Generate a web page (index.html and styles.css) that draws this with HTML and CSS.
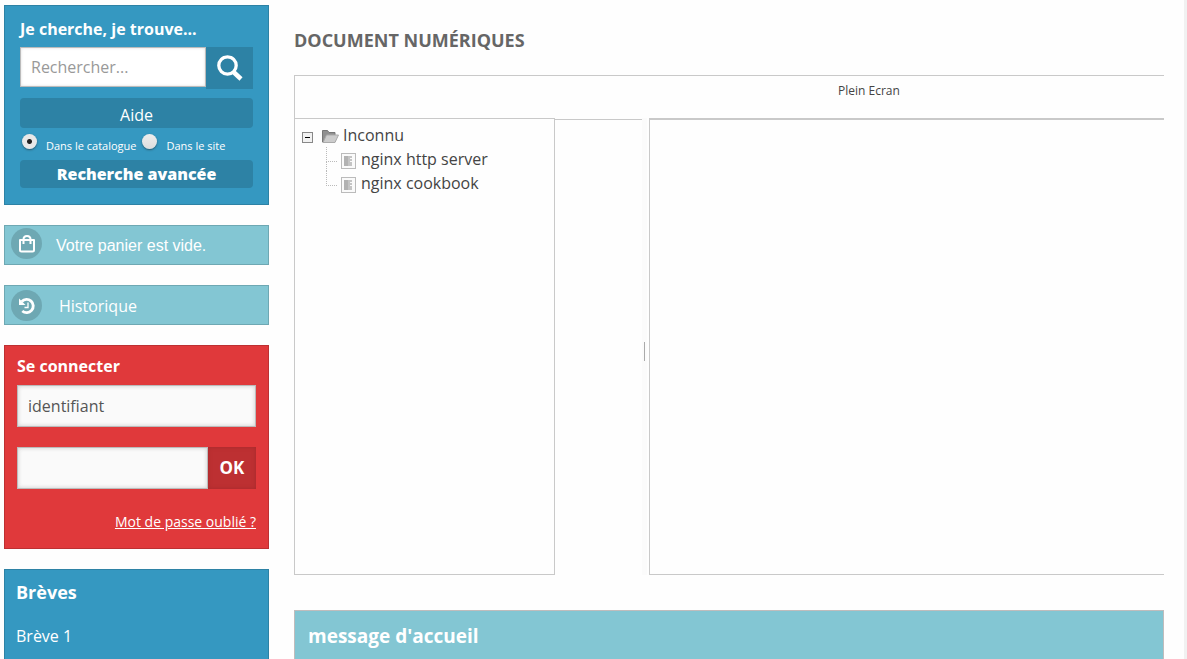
FILE: index.html
```html
<!DOCTYPE html>
<html lang="fr">
<head>
<meta charset="utf-8">
<title>Document numériques</title>
<link rel="stylesheet" href="styles.css">
</head>
<body>
<div class="page">
  <aside class="sidebar">
    <form class="panel panel-blue search">
      <h3 class="search-title"><label for="q">Je cherche, je trouve...</label></h3>
      <div class="search-row">
        <input class="search-input" id="q" type="text" placeholder="Rechercher...">
        <button class="search-go" type="button" aria-label="Rechercher">
          <svg width="26" height="26" viewBox="0 0 26 26" fill="none" stroke="#fff"><circle cx="10.500" cy="10.500" r="8.700" stroke-width="3.300"/><path d="M16.500 17l7.500 7" stroke-width="4.500"/></svg>
        </button>
      </div>
      <button class="bar help" type="button">Aide</button>
      <div class="scope">
        <input class="radio" type="radio" name="scope" id="cat" checked><label for="cat">Dans le catalogue</label>
        <input class="radio" type="radio" name="scope" id="site"><label for="site">Dans le site</label>
      </div>
      <a class="bar advanced" href="#">Recherche avancée</a>
    </form>

    <section class="panel panel-aqua">
      <span class="round"><svg width="18" height="18" viewBox="0 0 18 18" fill="none" stroke="#fff" stroke-width="2"><path d="M2 5h14v10q0 1.500-1.500 1.500h-11Q2 16.500 2 15z" stroke-linejoin="round"/><path d="M5.500 9V4.500q0-3.500 3.500-3.500t3.500 3.500V9"/></svg></span>
      <span class="basket">Votre panier est vide.</span>
    </section>

    <section class="panel panel-aqua">
      <span class="round"><svg width="18" height="18" viewBox="0 0 18 18" fill="none" stroke="#fff"><path d="M3.800 4.500A6.600 6.600 0 1 1 4.300 14" stroke-width="2.900"/><path d="M1 1.500V8h6.500z" fill="#fff" stroke="none"/><path d="M10 5.500v5H6.500" stroke-width="1.300"/></svg></span>
      <a class="history" href="#">Historique</a>
    </section>

    <form class="panel panel-red login">
      <h3 class="login-title">Se connecter</h3>
      <input class="field" type="text" value="identifiant" aria-label="Identifiant">
      <div class="pass-row">
        <input class="field" type="password" aria-label="Mot de passe">
        <button class="ok" type="button">OK</button>
      </div>
      <a class="forgot" href="#">Mot de passe oublié ?</a>
    </form>

    <section class="panel panel-blue news">
      <h3 class="news-title">Brèves</h3>
      <a class="news-link" href="#">Brève 1</a>
    </section>
  </aside>

  <main class="main">
    <h1 class="title">DOCUMENT NUMÉRIQUES</h1>
    <section class="viewer">
      <div class="toolbar"><a class="fullscreen" href="#">Plein Ecran</a></div>
      <div class="panes">
        <div class="left">
          <nav class="tree">
            <div class="node">
              <svg class="toggle" width="11" height="11" viewBox="0 0 11 11"><rect x=".5" y=".5" width="10" height="10" fill="#f2f2f2" stroke="#888"/><path d="M3 5.500h5" stroke="#000"/></svg>
              <svg class="folder" width="17" height="15" viewBox="0 0 17 15"><path d="M.5 13V1.500h5l1.500 2h6V13z" fill="#909090" stroke="#777"/><path d="M1 13.500L4.500 6H16.500L13 13.500z" fill="#ccc" stroke="#aaa"/></svg>
              <a href="#">Inconnu</a>
            </div>
            <ul class="leaves">
              <li class="leaf"><svg class="doc" width="15" height="16" viewBox="0 0 15 16"><rect x=".5" y=".5" width="14" height="15" fill="#fafafa" stroke="#bbb"/><path d="M3 3h8v2H9v1h2v2H9v1h2v4H3z" fill="#c4c4c4"/><path d="M3 3h4v10H3z" fill="#b2b2b2"/></svg><a href="#">nginx http server</a></li>
              <li class="leaf"><svg class="doc" width="15" height="16" viewBox="0 0 15 16"><rect x=".5" y=".5" width="14" height="15" fill="#fafafa" stroke="#bbb"/><path d="M3 3h8v2H9v1h2v2H9v1h2v4H3z" fill="#c4c4c4"/><path d="M3 3h4v10H3z" fill="#b2b2b2"/></svg><a href="#">nginx cookbook</a></li>
            </ul>
          </nav>
          <div class="gutter"></div>
        </div>
        <div class="splitter"><span class="grip"></span></div>
        <div class="reader"></div>
      </div>
    </section>
    <section class="welcome"><h2 class="welcome-title">message d'accueil</h2></section>
  </main>
</div>
</body>
</html>
```
FILE: styles.css
```css
* { box-sizing: border-box; }
body { margin: 0; font: 16px/24px "Open Sans", sans-serif; color: #444; background: #fefefe; }
h1, h2, h3, ul { margin: 0; padding: 0; }
a { color: inherit; text-decoration: none; }
button, input { font: inherit; color: inherit; border: 0; margin: 0; padding: 0; border-radius: 0; }
svg { display: block; }

.page { display: flex; gap: 25px; height: 100vh; overflow: hidden; padding: 5px 20px 0 4px; border-right: 3px solid #f1f1f1; }
.sidebar { flex: 0 0 265px; min-width: 0; display: flex; flex-direction: column; gap: 20px; }
.panel { border: 1px solid; color: #fff; }
.panel-blue { background: #3598c1; border-color: #2d82a5; }
.panel-aqua { background: #83c6d3; border-color: #6ea8b3; display: flex; align-items: flex-start; height: 40px; padding: 2px 6px; }
.panel-red { background: #e0393b; border-color: #bd3032; }

.search { padding: 11px 15px 16px; }
.search-title { font-size: 16px; line-height: 24px; }
.search-row { display: flex; align-items: flex-start; margin: 6px 0 9px; }
.search-input { flex: 1; width: 100%; min-width: 0; height: 40px; padding: 0 10px; background: #fff; border: 1px solid #bbb; box-shadow: inset 0 0 3px #ddd; color: #444; }
.search-input::placeholder { color: #999; opacity: 1; }
.search-go { flex: 0 0 47px; height: 42px; background: #2d82a5; display: flex; align-items: center; justify-content: center; }
.bar { display: block; width: 100%; background: #2d82a5; border-radius: 4px; text-align: center; }
.help { height: 30px; padding-top: 4px; }
.scope { display: flex; height: 32px; font-size: 11px; line-height: 16px; padding: 6px 0 0 2px; }
.scope label { padding-top: 4px; margin: 0 6px 0 9px; white-space: nowrap; }
.radio { appearance: none; flex: none; width: 15px; height: 15px; border-radius: 50%; background: linear-gradient(#eee, #ddd); box-shadow: 0 1px 2px #2228; }
.radio:checked { background: radial-gradient(circle, #222 2px, #e8e8e8 3px); }
.advanced { height: 28px; line-height: 28px; font-weight: 800; }

.round { flex: none; width: 31px; height: 31px; border-radius: 50%; background: #6ea8b3; display: flex; align-items: center; justify-content: center; }
.basket { font-family: "Liberation Sans", sans-serif; margin: 6px 0 0 14px; }
.panel-aqua + .panel-aqua { padding-top: 4px; }
.history { margin: 4px 0 0 17px; }

.login { padding: 8px 12px 13px; }
.login-title { font-size: 16px; line-height: 24px; margin-bottom: 7px; }
.field { display: block; width: 100%; min-width: 0; height: 42px; padding: 0 10px; background: #fafafa; border: 1px solid #bbb; box-shadow: inset 0 0 4px #ccc; color: #555; }
.pass-row { display: flex; margin: 20px 0; }
.ok { flex: 0 0 48px; background: #bd3032; font-size: 17px; font-weight: 700; box-shadow: inset 0 0 4px #a52a2c; }
.forgot { display: block; text-align: right; font-size: 14px; line-height: 26px; text-decoration: underline; }

.news { flex: 1; padding: 10px 11px; border-bottom: 0; }
.news-title { font-size: 18px; line-height: 24px; margin-bottom: 20px; }

.main { flex: 1; min-width: 0; display: flex; flex-direction: column; }
.title { font-size: 18px; line-height: 24px; color: #666; margin: 23px 0; }
.toolbar { height: 43px; border: solid #c9c9c9; border-width: 1px 0 0 1px; padding: 6px 0 0 543px; font-size: 12px; line-height: 18px; }
.panes { display: flex; height: 457px; }
.left { flex: 0 0 40%; display: flex; }
.tree { width: 75%; border: 1px solid #c9c9c9; padding: 4px 7px; }
.gutter { flex: 1; border-top: 1px solid #c9c9c9; margin-top: 1px; }
.splitter { flex: 0 0 5px; background: #fbfbfb; display: flex; align-items: center; justify-content: center; padding-top: 10px; }
.grip { width: 1px; height: 19px; background: #aaa; }
.reader { flex: 1; margin-left: 2px; border: solid #c9c9c9; border-width: 2px 0 1px 1px; }
.node { display: flex; align-items: center; }
.toggle { margin: 4px 9px 0 0; }
.folder { margin: 2px 4px 0 0; }
.leaves { list-style: none; margin-left: 24px; }
.leaf { position: relative; display: flex; align-items: center; height: 24px; padding-left: 15px; }
.leaf::before { content: ""; position: absolute; left: 0; top: 0; width: 10px; height: 14px; border: dotted #bbb; border-width: 0 0 1px 1px; }
.leaf:not(:last-child)::after { content: ""; position: absolute; left: 0; top: 14px; height: 10px; border-left: 1px dotted #bbb; }
.doc { margin: 4px 5px 0 0; }
.welcome { flex: 1; margin-top: 35px; background: #83c6d3; border: 1px solid #c0bcbc; border-bottom: 0; padding: 13px; color: #fff; }
.welcome-title { font-size: 19px; line-height: 24px; }
```
